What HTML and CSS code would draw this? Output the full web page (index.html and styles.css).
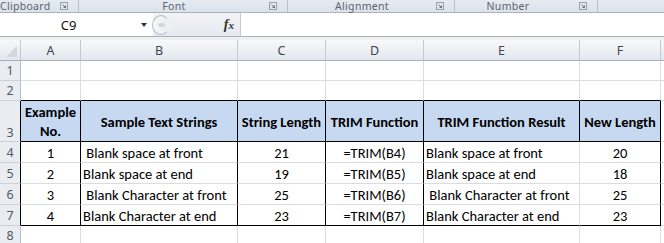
FILE: index.html
```html
<!DOCTYPE html>
<html lang="en">
<head>
    <meta charset="UTF-8">
    <meta name="viewport" content="width=device-width, initial-scale=1.0">
    <title>TRIM Function Example</title>
    <link rel="stylesheet" href="styles.css">
</head>
<body>
    <!-- Ribbon group labels -->
    <div class="ribbon">
        <div class="group group-clipboard"><span class="group-label">Clipboard</span><span class="launcher"><svg width="8" height="8" viewBox="0 0 8 8"><rect x="0.5" y="0.5" width="7" height="7" fill="none" stroke="#9aa3ad"/><path d="M2.5 2.5 L5.5 5.5 M3.5 5.5 H5.5 V3.5" fill="none" stroke="#6b7480"/></svg></span></div>
        <div class="group group-font"><span class="group-label">Font</span><span class="launcher"><svg width="8" height="8" viewBox="0 0 8 8"><rect x="0.5" y="0.5" width="7" height="7" fill="none" stroke="#9aa3ad"/><path d="M2.5 2.5 L5.5 5.5 M3.5 5.5 H5.5 V3.5" fill="none" stroke="#6b7480"/></svg></span></div>
        <div class="group group-align"><span class="group-label">Alignment</span><span class="launcher"><svg width="8" height="8" viewBox="0 0 8 8"><rect x="0.5" y="0.5" width="7" height="7" fill="none" stroke="#9aa3ad"/><path d="M2.5 2.5 L5.5 5.5 M3.5 5.5 H5.5 V3.5" fill="none" stroke="#6b7480"/></svg></span></div>
        <div class="group group-number"><span class="group-label">Number</span><span class="launcher"><svg width="8" height="8" viewBox="0 0 8 8"><rect x="0.5" y="0.5" width="7" height="7" fill="none" stroke="#9aa3ad"/><path d="M2.5 2.5 L5.5 5.5 M3.5 5.5 H5.5 V3.5" fill="none" stroke="#6b7480"/></svg></span></div>
        <div class="group group-rest"></div>
    </div>

    <!-- Formula bar -->
    <div class="formula-bar">
        <div class="name-box">
            <span class="name-text">C9</span>
            <span class="name-arrow"></span>
        </div>
        <div class="formula-tools">
            <span class="handle"><span class="handle-dot"></span></span>
            <span class="fx">f<small>x</small></span>
        </div>
        <div class="formula-input"></div>
    </div>
    <div class="bar-gap"></div>

    <!-- Sheet -->
    <table class="sheet">
        <colgroup>
            <col class="w-hdr"><col class="w-a"><col class="w-b"><col class="w-c">
            <col class="w-d"><col class="w-e"><col class="w-f"><col class="w-g">
        </colgroup>
        <tr class="col-headers">
            <th class="corner"><span class="corner-tri"></span></th>
            <th>A</th><th>B</th><th>C</th><th>D</th><th>E</th><th>F</th><th></th>
        </tr>
        <tr class="r20">
            <th class="row-hdr">1</th>
            <td></td><td></td><td></td><td></td><td></td><td></td><td></td>
        </tr>
        <tr class="r20">
            <th class="row-hdr">2</th>
            <td class="edge-b"></td><td class="edge-b"></td><td class="edge-b"></td><td class="edge-b"></td><td class="edge-b"></td><td class="edge-b"></td><td></td>
        </tr>
        <tr class="r39">
            <th class="row-hdr bottom edge-r">3</th>
            <td class="head box">Example<br>No.</td>
            <td class="head box">Sample Text Strings</td>
            <td class="head box">String Length</td>
            <td class="head box">TRIM Function</td>
            <td class="head box">TRIM Function Result</td>
            <td class="head box">New Length</td>
            <td></td>
        </tr>
        <tr class="r20">
            <th class="row-hdr edge-r">4</th>
            <td class="num edge-r">1</td>
            <td class="txt edge-r"> Blank space at front</td>
            <td class="num edge-r">21</td>
            <td class="num edge-r">=TRIM(B4)</td>
            <td class="txt">Blank space at front</td>
            <td class="num edge-r">20</td>
            <td></td>
        </tr>
        <tr class="r20">
            <th class="row-hdr edge-r">5</th>
            <td class="num edge-r">2</td>
            <td class="txt edge-r">Blank space at end </td>
            <td class="num edge-r">19</td>
            <td class="num edge-r">=TRIM(B5)</td>
            <td class="txt">Blank space at end</td>
            <td class="num edge-r">18</td>
            <td></td>
        </tr>
        <tr class="r20">
            <th class="row-hdr edge-r">6</th>
            <td class="num edge-r">3</td>
            <td class="txt edge-r"> Blank Character at front</td>
            <td class="num edge-r">25</td>
            <td class="num edge-r">=TRIM(B6)</td>
            <td class="txt"> Blank Character at front</td>
            <td class="num edge-r">25</td>
            <td></td>
        </tr>
        <tr class="r20">
            <th class="row-hdr edge-r">7</th>
            <td class="num edge-r edge-b">4</td>
            <td class="txt edge-r edge-b">Blank Character at end</td>
            <td class="num edge-r edge-b">23</td>
            <td class="num edge-r edge-b">=TRIM(B7)</td>
            <td class="txt edge-b">Blank Character at end</td>
            <td class="num edge-r edge-b">23</td>
            <td></td>
        </tr>
        <tr class="r20">
            <th class="row-hdr">8</th>
            <td></td><td></td><td></td><td></td><td></td><td></td><td></td>
        </tr>
    </table>
    <div class="sheet-tail"></div>
</body>
</html>
```

FILE: styles.css
```css
/* Reset */
* {
    margin: 0;
    padding: 0;
    box-sizing: border-box;
}

body {
    width: 664px;
    height: 243px;
    overflow: hidden;
    background-color: #fff;
    font-family: 'Noto Sans', 'Open Sans', sans-serif;
}

/* Ribbon group labels */
.ribbon {
    display: flex;
    height: 13px;
    background: linear-gradient(#e6ebf1, #dbe2ea);
    border-bottom: 1px solid #a9b2bd;
}

.group {
    display: flex;
    align-items: center;
    height: 12px;
    border-right: 1px solid #b9c2cc;
}

.group-clipboard { width: 79px; }
.group-font { width: 209px; }
.group-align { width: 167px; }
.group-number { width: 143px; }
.group-rest { flex: 1; border-right: none; }

.group-label {
    flex: 1;
    text-align: center;
    font-size: 10.5px;
    line-height: 12px;
    color: #5b6470;
    letter-spacing: 0.3px;
}

.group-clipboard .group-label {
    text-align: left;
}

.group-number .group-label {
    padding-right: 18px;
}

.launcher {
    width: 18px;
    height: 12px;
    display: flex;
    align-items: center;
    justify-content: flex-start;
}

/* Formula bar */
.formula-bar {
    display: flex;
    height: 24px;
    border-bottom: 1px solid #a9b0ba;
}

.name-box {
    width: 153px;
    display: flex;
    align-items: center;
    background-color: #fff;
}

.name-text {
    flex: 1;
    text-align: center;
    font-size: 13px;
    color: #111;
}

.name-arrow {
    width: 0;
    height: 0;
    margin: 0 6px 0 4px;
    border-left: 3px solid transparent;
    border-right: 3px solid transparent;
    border-top: 4px solid #333;
}

.formula-tools {
    width: 88px;
    display: flex;
    align-items: center;
    justify-content: space-between;
    padding-right: 6px;
    background: linear-gradient(#f1f3f6, #e6e9ee);
    border-right: 1px solid #c4cad2;
}

.handle {
    width: 18px;
    height: 20px;
    margin-left: -1px;
    border: 1px solid #b5bbc4;
    border-right-color: transparent;
    border-radius: 50%;
    background: linear-gradient(90deg, #f7f8fa, #e9ecf0);
    display: flex;
    align-items: center;
    justify-content: center;
}

.handle-dot {
    width: 7px;
    height: 4px;
    border-radius: 50%;
    background-color: #d2d6dc;
}

.fx {
    font-family: 'Liberation Serif', serif;
    font-style: italic;
    font-weight: bold;
    font-size: 14px;
    color: #333;
}

.fx small {
    font-size: 11px;
}

.formula-input {
    flex: 1;
    background-color: #fff;
}

.bar-gap {
    height: 3px;
    background-color: #eef0f3;
}

/* Sheet */
.sheet {
    border-collapse: separate;
    border-spacing: 0;
    table-layout: fixed;
    width: 671px;
    font-family: 'Carlito', 'Lato', sans-serif;
    font-size: 14.5px;
    color: #000;
}

.w-hdr { width: 21px; }
.w-a { width: 60px; }
.w-b { width: 157px; }
.w-c { width: 88px; }
.w-d { width: 98px; }
.w-e { width: 156px; }
.w-f { width: 81px; }
.w-g { width: 10px; }

.sheet td {
    border-right: 1px solid #dadcdf;
    border-bottom: 1px solid #dadcdf;
    padding: 2px 2px 0;
    white-space: pre;
    overflow: hidden;
    vertical-align: middle;
}

.col-headers th {
    height: 21px;
    font-family: 'Noto Sans', 'Open Sans', sans-serif;
    font-weight: normal;
    font-size: 12.5px;
    color: #3f4650;
    background: linear-gradient(#f7f8fa, #e3e7ed);
    border-right: 1px solid #c3c9d1;
    border-bottom: 1px solid #a7b0bb;
    text-align: center;
}

.corner {
    position: relative;
}

.corner-tri {
    position: absolute;
    right: 3px;
    bottom: 3px;
    width: 0;
    height: 0;
    border-left: 11px solid transparent;
    border-bottom: 11px solid #d4d8de;
}

.row-hdr {
    font-family: 'Noto Sans', 'Open Sans', sans-serif;
    font-weight: normal;
    font-size: 12.5px;
    color: #4f5a66;
    background-color: #e9ecf0;
    border-right: 1px solid #b8bfc8;
    border-bottom: 1px solid #ccd1d8;
    text-align: center;
}

.row-hdr.bottom {
    vertical-align: bottom;
    line-height: 17px;
}

.r20 { height: 20px; }
.r39 { height: 39px; }

.sheet td.head {
    background-color: #c6d9f1;
    font-weight: bold;
    text-align: center;
    line-height: 19px;
}

.sheet td.box,
.sheet td.edge-r {
    border-right: 1px solid #000;
}

.sheet td.box,
.sheet td.edge-b {
    border-bottom: 1px solid #000;
}

.sheet .row-hdr.edge-r {
    border-right: 1px solid #000;
}

.sheet td.num {
    text-align: center;
}

.sheet td.txt {
    text-align: left;
}

/* Top of row 9, cut by the window edge */
.sheet-tail {
    height: 4px;
    background: linear-gradient(90deg, #e9ecf0 0, #e9ecf0 20px, #b8bfc8 20px, #b8bfc8 21px, #fff 21px);
}
```
